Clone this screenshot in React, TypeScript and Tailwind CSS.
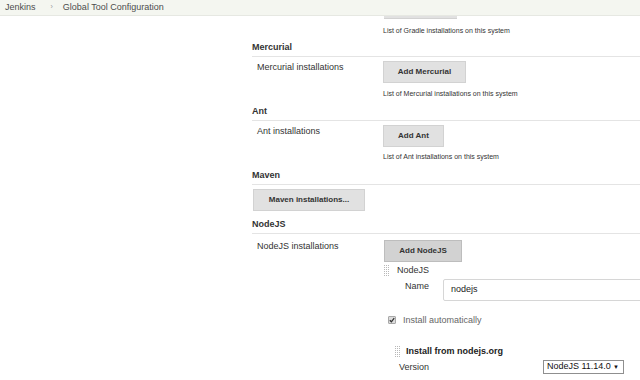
import React from "react";

function DragHandle({ w = 5, h = 11 }: { w?: number; h?: number }) {
  const dots = [];
  for (let y = 0; y < h; y += 2) {
    for (let x = 0; x < w; x += 2) {
      dots.push(<rect key={`${x}-${y}`} x={x} y={y} width="1" height="1" fill="#b8b8b8" />);
    }
  }
  return (
    <svg width={w} height={h} viewBox={`0 0 ${w} ${h}`} className="shrink-0">
      {dots}
    </svg>
  );
}

function SectionHeader({ title, className = "" }: { title: string; className?: string }) {
  return (
    <div className={`border-b border-[#e4e4e4] pb-[3px] pt-[1px] text-[9px] font-bold leading-[12px] text-[#333] ${className}`}>
      {title}
    </div>
  );
}

function Button({ label, width, active = false }: { label: string; width: string; active?: boolean }) {
  return (
    <div
      className={`flex h-[22px] shrink-0 items-center justify-center border text-[8px] font-bold text-[#333] ${width} ${
        active ? "border-[#bdbdbd] bg-[#d2d2d2]" : "border-[#d2d2d2] bg-[#e1e1e1]"
      }`}
    >
      {label}
    </div>
  );
}

function Description({ text, className = "" }: { text: string; className?: string }) {
  return <div className={`ml-[131px] text-[7px] leading-[10px] text-[#333] ${className}`}>{text}</div>;
}

function InstallRow({ label, button, width, active }: { label: string; button: string; width: string; active?: boolean }) {
  return (
    <div className="mt-[4px] flex">
      <div className="w-[131px] shrink-0 pl-[5px] text-[9px] leading-[12px] text-[#333]">{label}</div>
      <Button label={button} width={width} active={active} />
    </div>
  );
}

export default function App() {
  return (
    <div className="h-[380px] w-[640px] overflow-hidden bg-white font-['Liberation_Sans',Arial,sans-serif]">
      <div className="flex h-[16px] items-center border-b border-[#e6e8e2] bg-[#f4f6f0] pl-[5px] text-[9px] text-[#4d4d4d]">
        <span>Jenkins</span>
        <span className="ml-[15px] text-[7px] text-[#999]">›</span>
        <span className="ml-[10px]">Global Tool Configuration</span>
      </div>

      <div className="pl-[252px]">
        <div className="ml-[132px] h-[3px] w-[73px] border-b border-[#d2d2d2] bg-[#e1e1e1]" />
        <Description text="List of Gradle installations on this system" className="mt-[7px]" />

        <SectionHeader title="Mercurial" className="mt-[4px]" />
        <InstallRow label="Mercurial installations" button="Add Mercurial" width="w-[83px]" />
        <Description text="List of Mercurial installations on this system" className="mt-[6px]" />

        <SectionHeader title="Ant" className="mt-[5px]" />
        <InstallRow label="Ant installations" button="Add Ant" width="w-[61px]" />
        <Description text="List of Ant installations on this system" className="mt-[5px]" />

        <SectionHeader title="Maven" className="mt-[6px]" />
        <div className="ml-[1px] mt-[4px]">
          <Button label="Maven installations..." width="w-[112px]" />
        </div>

        <SectionHeader title="NodeJS" className="mt-[6px]" />
        <div className="mt-[6px] flex">
          <div className="w-[132px] shrink-0 pl-[5px] text-[9px] leading-[12px] text-[#333]">NodeJS installations</div>
          <div className="flex min-w-0 flex-1 flex-col">
            <Button label="Add NodeJS" width="w-[78px]" active />

            <div className="mt-[2px] flex h-[12px] items-center gap-[8px]">
              <DragHandle w={5} h={11} />
              <span className="text-[9px] leading-[12px] text-[#333]">NodeJS</span>
            </div>

            <div className="mt-[3px] flex">
              <div className="w-[59px] shrink-0 pl-[21px] pt-[1px] text-[9px] leading-[12px] text-[#333]">Name</div>
              <div className="flex h-[22px] w-[230px] shrink-0 items-center rounded-[2px] border border-[#d6d6d6] pl-[7px] text-[9px] text-[#222]">
                nodejs
              </div>
            </div>

            <div className="mt-[12px] flex h-[13px] items-center gap-[7px] pl-[4px]">
              <span className="flex h-[8px] w-[8px] items-center justify-center rounded-[1px] border border-[#a8a8a8] bg-[#dcdcdc]">
                <svg width="6" height="6" viewBox="0 0 6 6">
                  <path d="M0.8 3.2 L2.4 4.8 L5.2 1.2" fill="none" stroke="#333" strokeWidth="1.3" />
                </svg>
              </span>
              <span className="text-[9px] leading-[12px] text-[#666]">Install automatically</span>
            </div>

            <div className="mt-[19px] flex h-[12px] items-center gap-[6px] pl-[11px]">
              <DragHandle w={5} h={11} />
              <span className="text-[9px] font-bold leading-[12px] text-[#222]">Install from nodejs.org</span>
            </div>

            <div className="mt-[3px] flex h-[14px] items-center pl-[15px]">
              <div className="w-[144px] shrink-0 text-[9px] leading-[12px] text-[#333]">Version</div>
              <div className="flex h-[14px] w-[81px] shrink-0 items-center justify-between border border-[#8f8f8f] bg-white pl-[3px] pr-[4px] text-[9px] text-[#111]">
                <span>NodeJS 11.14.0</span>
                <span className="text-[6px]">▼</span>
              </div>
            </div>
          </div>
        </div>
      </div>
    </div>
  );
}
